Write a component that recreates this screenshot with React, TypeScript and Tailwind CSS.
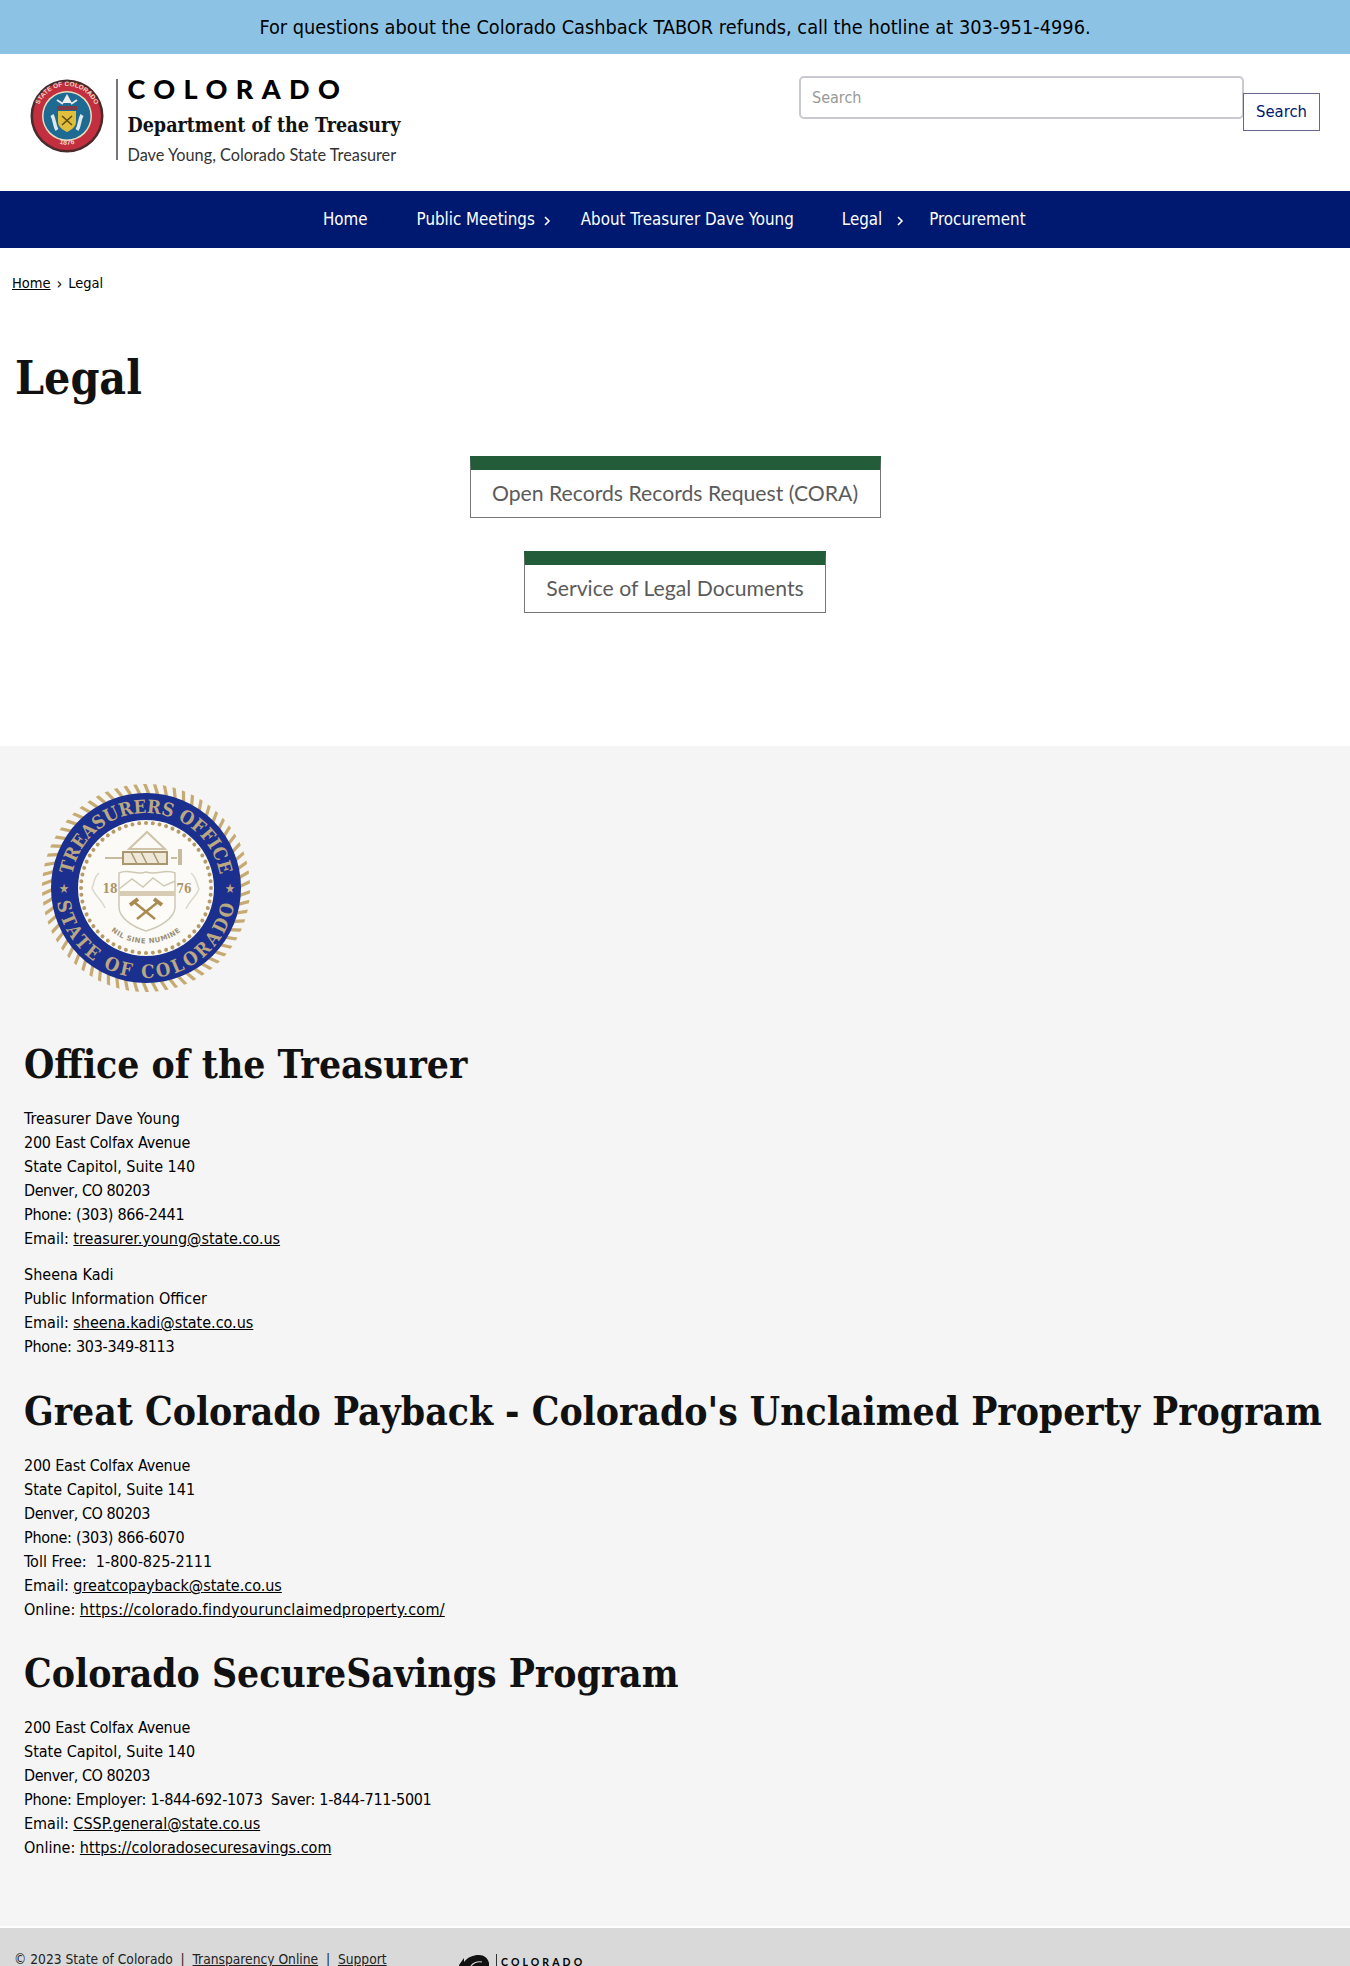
import React from "react";

const body = { fontFamily: '"DejaVu Sans Condensed", "DejaVu Sans", sans-serif' };
const slab = { fontFamily: '"DejaVu Serif Condensed", "DejaVu Serif", serif' };
const lato = { fontFamily: '"Lato", sans-serif' };

function SmallSeal() {
  return (
    <svg width="74" height="74" viewBox="0 0 74 74" className="shrink-0">
      <defs>
        <path id="smallTop" d="M7 37a30 30 0 0 1 60 0" />
        <path id="smallBottom" d="M14 55a30 30 0 0 0 46 0" />
      </defs>
      <circle cx="37" cy="37" r="36.5" fill="#4a2a2a" />
      <circle cx="37" cy="37" r="34" fill="#c22f3f" />
      <circle cx="37" cy="37" r="25" fill="#e8dfc0" />
      <circle cx="37" cy="37" r="23.5" fill="#1d6a93" />
      <text fontFamily='"Liberation Sans", sans-serif' fontWeight="700" fontSize="6.5" fill="#f0d8c8">
        <textPath href="#smallTop" startOffset="50%" textAnchor="middle">STATE OF COLORADO</textPath>
      </text>
      <text fontFamily='"Liberation Sans", sans-serif' fontWeight="700" fontSize="7" fill="#f0d8c8">
        <textPath href="#smallBottom" startOffset="50%" textAnchor="middle">1876</textPath>
      </text>
      <path d="M37 15l5 9H32z" fill="#eeeeee" />
      <path d="M27 21l6 4M47 21l-6 4" stroke="#e8e8e8" strokeWidth="2" />
      <path d="M27 27h20v4H27z" fill="#7c3a4a" />
      <path d="M28 32h18v11c0 5-5 8-9 10-4-2-9-5-9-10z" fill="#e0bd3a" />
      <path d="M32 37l10 9M42 37l-10 9" stroke="#5a4a10" strokeWidth="1.5" />
      <path d="M22 36c3 5 2 11 5 15M52 36c-3 5-2 11-5 15" stroke="#dfe8e8" strokeWidth="3.5" fill="none" />
    </svg>
  );
}

function BigSeal() {
  const rope = Array.from({ length: 66 }, (_, i) => (i * 360) / 66);
  const dots = Array.from({ length: 60 }, (_, i) => i * 6);
  const serif = '"DejaVu Serif Condensed", "DejaVu Serif", serif';
  return (
    <svg width="210" height="210" viewBox="0 0 210 210" className="block">
      <defs>
        <path id="sealTop" d="M30 105a75 75 0 0 1 150 0" />
        <path id="sealBottom" d="M15 105a90 90 0 0 0 180 0" />
        <path id="sealNil" d="M61 139a56 56 0 0 0 88 0" />
      </defs>
      {rope.map((a) => (
        <path key={a} d="M102 1l3.5 0l4.5 11l-3.5 0z" fill="#c7aa72" transform={`rotate(${a} 105 105)`} />
      ))}
      <circle cx="105" cy="105" r="95" fill="#1a2f8e" />
      <circle cx="105" cy="105" r="68" fill="#fbfaf6" />
      {dots.map((a) => (
        <circle key={a} cx="105" cy="40" r="2" fill="#b79b66" transform={`rotate(${a} 105 105)`} />
      ))}
      <text fontFamily={serif} fontWeight="700" fontSize="18.5" fill="#bca783">
        <textPath href="#sealTop" startOffset="50%" textAnchor="middle">TREASURERS OFFICE</textPath>
      </text>
      <text fontFamily={serif} fontWeight="700" fontSize="18.5" fill="#bca783" letterSpacing="2.7">
        <textPath href="#sealBottom" startOffset="50%" textAnchor="middle">STATE OF COLORADO</textPath>
      </text>
      <text fontFamily='"DejaVu Sans", sans-serif' fontWeight="700" fontSize="7" fill="#9a8f78" letterSpacing="0.5">
        <textPath href="#sealNil" startOffset="50%" textAnchor="middle">NIL SINE NUMINE</textPath>
      </text>
      <text x="23" y="110" fontSize="13" textAnchor="middle" fill="#bca783">★</text>
      <text x="189" y="110" fontSize="13" textAnchor="middle" fill="#bca783">★</text>
      <path d="M88 66l18-17 18 17z" fill="none" stroke="#cfc4aa" strokeWidth="2" />
      <path d="M64 75h18M130 75h6" stroke="#c7bb9f" strokeWidth="2" />
      <path d="M82 69h44v12H82z" fill="#efe8d8" stroke="#a9976f" strokeWidth="2" />
      <path d="M90 69l6 12M100 69l6 12M112 69l6 12" stroke="#a9976f" strokeWidth="1.5" />
      <path d="M139 66v16" stroke="#c7bb9f" strokeWidth="4" />
      <path d="M78 90c10-5 17 3 27-1 11 4 19-4 29 1v34c0 11-15 20-29 24-13-4-27-13-27-24z" fill="#fdfcf8" stroke="#cfc8b4" strokeWidth="1.5" />
      <path d="M78 106l13-10 11 8 10-9 11 8 11-5" fill="none" stroke="#cfc8b4" strokeWidth="1.5" />
      <rect x="78" y="108" width="56" height="5" fill="#d8cdb4" />
      <path d="M58 90c-6 5-4 9-7 15 3 8 10 12 13 20M150 90c6 5 5 10 8 16-3 8-10 12-13 20" fill="none" stroke="#ddd8ca" strokeWidth="1.5" />
      <text x="69" y="110" fontFamily={serif} fontWeight="700" fontSize="12" textAnchor="middle" fill="#a99468">18</text>
      <text x="143" y="110" fontFamily={serif} fontWeight="700" fontSize="12" textAnchor="middle" fill="#a99468">76</text>
      <path d="M93 119l21 17M117 119l-21 17" stroke="#a98b52" strokeWidth="2.5" />
      <path d="M89 122l8-6M121 122l-8-6" stroke="#a98b52" strokeWidth="4" />
    </svg>
  );
}

function StateLogo() {
  return (
    <div className="flex items-start">
      <svg width="32" height="26" viewBox="0 0 32 26" className="shrink-0">
        <path d="M1 11L6 4v4c4-5 9-7 15-7 5 0 9 3 10 8v17H2z" fill="#111" />
        <path d="M12 14c2-5 7-7 12-6M15 18c2-4 5-5 9-4" fill="none" stroke="#d9d9d9" strokeWidth="1.2" />
      </svg>
      <div className="ml-[6px] h-[20px] w-px bg-[#333]" />
      <span className="ml-[4px] mt-[3px] text-[10.5px] font-bold leading-none tracking-[3.1px] text-black" style={lato}>COLORADO</span>
    </div>
  );
}

function A({ children, className = "" }: { children: React.ReactNode; className?: string }) {
  return <a className={`text-black underline ${className}`}>{children}</a>;
}

function Heading({ children }: { children: React.ReactNode }) {
  return (
    <h2 className="mb-[18px] whitespace-nowrap text-[38.7px] font-bold leading-[48px] text-[#111]" style={slab}>
      {children}
    </h2>
  );
}

function Card({ label, w }: { label: string; w: string }) {
  return (
    <a className={`block border-x border-b border-[#777] border-t-[14px] border-t-[#235c39] bg-white text-center text-[21.2px] leading-[47px] text-[#5b5b5b] ${w}`} style={lato}>
      {label}
    </a>
  );
}

function Chevron() {
  return (
    <svg width="8" height="12" viewBox="0 0 8 12" className="mt-[2px] shrink-0">
      <path d="M2 2l4 4-4 4" fill="none" stroke="currentColor" strokeWidth="1.6" />
    </svg>
  );
}

function Addr({ children }: { children: React.ReactNode }) {
  return <span className="tracking-[-0.22px]">{children}</span>;
}
function City({ children }: { children: React.ReactNode }) {
  return <span className="tracking-[-0.45px]">{children}</span>;
}
function Num({ children }: { children: React.ReactNode }) {
  return <span className="tracking-[-0.3px]">{children}</span>;
}

export default function App() {
  return (
    <div className="h-[1966px] w-[1350px] overflow-hidden bg-white text-[16px] text-black" style={body}>
      <div className="flex h-[54px] items-center justify-center bg-[#8cc3e5] pt-[1px] text-[19.8px] text-black">
        For questions about the Colorado Cashback TABOR refunds, call the hotline at 303-951-4996.
      </div>

      <header className="flex h-[137px] justify-between pl-[30px] pr-[30px]">
        <div className="flex items-start pt-[25px]">
          <SmallSeal />
          <div className="ml-[12px] h-[81px] w-[1.5px] bg-[#777]" />
          <div className="ml-[10px] mt-[-4px]">
            <div className="text-[27px] font-black leading-[28px] tracking-[8.4px] text-black" style={lato}>COLORADO</div>
            <div className="mt-[11px] text-[19.5px] font-bold leading-[24px] text-[#111]" style={slab}>Department of the Treasury</div>
            <div className="mt-[6px] text-[16.3px] leading-[22px] text-[#333]" style={lato}>Dave Young, Colorado State Treasurer</div>
          </div>
        </div>
        <div className="flex items-start pt-[22px]">
          <div className="flex h-[43px] w-[445px] items-center rounded-[5px] border-2 border-[#c9c9d2] pl-[11px] text-[16px] text-[#999]">Search</div>
          <div className="ml-[-1px] mt-[17px] flex h-[38px] w-[77px] items-center justify-center border-[1.5px] border-[#66668f] pt-[1px] text-[16.5px] text-[#001970]">Search</div>
        </div>
      </header>

      <nav className="flex h-[57px] items-center bg-[#001970] pl-[323px] pt-[1px] text-[16.8px] text-white">
        <span>Home</span>
        <span className="ml-[49px]">Public Meetings</span>
        <span className="ml-[8px]"><Chevron /></span>
        <span className="ml-[30px]">About Treasurer Dave Young</span>
        <span className="ml-[48px]">Legal</span>
        <span className="ml-[14px]"><Chevron /></span>
        <span className="ml-[25px]">Procurement</span>
      </nav>

      <div className="mt-[26px] flex h-[20px] items-center pl-[12px] text-[14.5px]">
        <a className="underline">Home</a>
        <span className="mx-[6px] text-[16px]">›</span>
        <span>Legal</span>
      </div>

      <h1 className="ml-[15px] mt-[56px] text-[46px] font-bold leading-[56px] text-[#111]" style={slab}>Legal</h1>

      <div className="mt-[50px] flex flex-col items-center gap-[33px]">
        <Card label="Open Records Records Request (CORA)" w="w-[411px]" />
        <Card label="Service of Legal Documents" w="w-[302px]" />
      </div>

      <footer className="mt-[133px] h-[1180px] bg-[#f5f5f5] pl-[24px] text-[16px] leading-[24px]">
        <div className="pl-[17px] pt-[37px]"><BigSeal /></div>
        <div className="mt-[48px]"><Heading>Office of the Treasurer</Heading></div>
        <p>Treasurer Dave Young<br /><Addr>200 East Colfax Avenue</Addr><br />State Capitol, Suite 140<br /><City>Denver, CO 80203</City><br /><Num>Phone: (303) 866-2441</Num><br />Email: <A>treasurer.young@state.co.us</A></p>
        <p className="mt-[12px]">Sheena Kadi<br />Public Information Officer<br />Email: <A>sheena.kadi@state.co.us</A><br /><Num>Phone: 303-349-8113</Num></p>
        <div className="mt-[29px]"><Heading>Great Colorado Payback - Colorado's Unclaimed Property Program</Heading></div>
        <p><Addr>200 East Colfax Avenue</Addr><br />State Capitol, Suite 141<br /><City>Denver, CO 80203</City><br /><Num>Phone: (303) 866-6070</Num><br />Toll Free:&nbsp; 1-800-825-2111<br />Email: <A>greatcopayback@state.co.us</A><br />Online: <A className="tracking-[0.27px]">https://colorado.findyourunclaimedproperty.com/</A></p>
        <div className="mt-[28px]"><Heading>Colorado SecureSavings Program</Heading></div>
        <p><Addr>200 East Colfax Avenue</Addr><br />State Capitol, Suite 140<br /><City>Denver, CO 80203</City><br /><Num>Phone: Employer: 1-844-692-1073&nbsp; Saver: 1-844-711-5001</Num><br />Email: <A>CSSP.general@state.co.us</A><br />Online: <A>https://coloradosecuresavings.com</A></p>
      </footer>

      <div className="mt-[2px] flex h-[60px] items-start bg-[#d9d9d9] pl-[14px] pt-[21px] text-[13.7px] leading-[20px] text-[#222]">
        <span className="w-[444px] whitespace-pre">© 2023 State of Colorado  |  <a className="underline">Transparency Online</a>  |  <a className="underline">Support</a></span>
        <div className="mt-[5px]"><StateLogo /></div>
      </div>
    </div>
  );
}
